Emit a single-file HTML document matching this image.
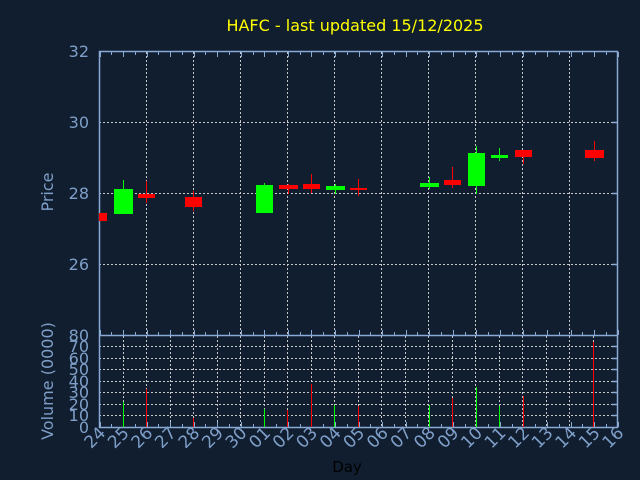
<!DOCTYPE html>
<html><head><meta charset="utf-8"><style>
html,body{margin:0;padding:0;background:#101e2f;width:640px;height:480px;overflow:hidden}
svg{display:block}
text{font-family:"DejaVu Sans","Liberation Sans",sans-serif}
</style></head><body>
<svg width="640" height="480" viewBox="0 0 640 480" xmlns="http://www.w3.org/2000/svg">
<rect width="640" height="480" fill="#101e2f"/>
<text x="355" y="31" fill="#ffff00" font-size="16" text-anchor="middle">HAFC - last updated 15/12/2025</text>
<g stroke="#c8c8c8" stroke-width="1" stroke-dasharray="2,2">
<line x1="99" y1="122.5" x2="617" y2="122.5"/>
<line x1="99" y1="193.5" x2="617" y2="193.5"/>
<line x1="99" y1="264.5" x2="617" y2="264.5"/>
<line x1="146.5" y1="52" x2="146.5" y2="335"/><line x1="193.5" y1="52" x2="193.5" y2="335"/>
<line x1="240.5" y1="52" x2="240.5" y2="335"/><line x1="287.5" y1="52" x2="287.5" y2="335"/>
<line x1="334.5" y1="52" x2="334.5" y2="335"/><line x1="381.5" y1="52" x2="381.5" y2="335"/>
<line x1="428.5" y1="52" x2="428.5" y2="335"/><line x1="475.5" y1="52" x2="475.5" y2="335"/>
<line x1="522.5" y1="52" x2="522.5" y2="335"/><line x1="569.5" y1="52" x2="569.5" y2="335"/>
<line x1="99" y1="346.5" x2="617" y2="346.5"/><line x1="99" y1="358.5" x2="617" y2="358.5"/>
<line x1="99" y1="369.5" x2="617" y2="369.5"/><line x1="99" y1="381.5" x2="617" y2="381.5"/>
<line x1="99" y1="392.5" x2="617" y2="392.5"/><line x1="99" y1="404.5" x2="617" y2="404.5"/>
<line x1="99" y1="415.5" x2="617" y2="415.5"/>
<line x1="123.5" y1="336" x2="123.5" y2="427"/><line x1="146.5" y1="336" x2="146.5" y2="427"/>
<line x1="170.5" y1="336" x2="170.5" y2="427"/><line x1="193.5" y1="336" x2="193.5" y2="427"/>
<line x1="217.5" y1="336" x2="217.5" y2="427"/><line x1="240.5" y1="336" x2="240.5" y2="427"/>
<line x1="264.5" y1="336" x2="264.5" y2="427"/><line x1="287.5" y1="336" x2="287.5" y2="427"/>
<line x1="311.5" y1="336" x2="311.5" y2="427"/><line x1="334.5" y1="336" x2="334.5" y2="427"/>
<line x1="358.5" y1="336" x2="358.5" y2="427"/><line x1="381.5" y1="336" x2="381.5" y2="427"/>
<line x1="405.5" y1="336" x2="405.5" y2="427"/><line x1="428.5" y1="336" x2="428.5" y2="427"/>
<line x1="452.5" y1="336" x2="452.5" y2="427"/><line x1="475.5" y1="336" x2="475.5" y2="427"/>
<line x1="499.5" y1="336" x2="499.5" y2="427"/><line x1="522.5" y1="336" x2="522.5" y2="427"/>
<line x1="546.5" y1="336" x2="546.5" y2="427"/><line x1="569.5" y1="336" x2="569.5" y2="427"/>
<line x1="593.5" y1="336" x2="593.5" y2="427"/>
</g>
<g stroke="#8aaad6" stroke-width="1.5" fill="none">
<rect x="99.5" y="51.5" width="518" height="376"/>
<line x1="99" y1="335.5" x2="618" y2="335.5"/>
<line x1="612" y1="122.5" x2="618" y2="122.5"/><line x1="612" y1="193.5" x2="618" y2="193.5"/><line x1="612" y1="264.5" x2="618" y2="264.5"/>
<line x1="612" y1="346.5" x2="618" y2="346.5"/><line x1="612" y1="358.5" x2="618" y2="358.5"/><line x1="612" y1="369.5" x2="618" y2="369.5"/>
<line x1="612" y1="381.5" x2="618" y2="381.5"/><line x1="612" y1="392.5" x2="618" y2="392.5"/><line x1="612" y1="404.5" x2="618" y2="404.5"/><line x1="612" y1="415.5" x2="618" y2="415.5"/>
</g>
<g stroke="#8aaad6" stroke-width="1" id="ticks"></g>
<g>
<rect x="99" y="213" width="8" height="8" fill="#ff0000"/>
<line x1="123.5" y1="180" x2="123.5" y2="214" stroke="#00ff00"/><rect x="114" y="189" width="19" height="25" fill="#00ff00"/>
<line x1="146.5" y1="181" x2="146.5" y2="203" stroke="#ff0000"/><rect x="138" y="194" width="17" height="4" fill="#ff0000"/>
<line x1="193.5" y1="191" x2="193.5" y2="211" stroke="#ff0000"/><rect x="185" y="197" width="17" height="10" fill="#ff0000"/>
<line x1="264.5" y1="183" x2="264.5" y2="213" stroke="#00ff00"/><rect x="256" y="185" width="17" height="28" fill="#00ff00"/>
<line x1="288.5" y1="184" x2="288.5" y2="194" stroke="#ff0000"/><rect x="279" y="185" width="19" height="4" fill="#ff0000"/>
<line x1="311.5" y1="174" x2="311.5" y2="193" stroke="#ff0000"/><rect x="303" y="184" width="17" height="5" fill="#ff0000"/>
<line x1="335.5" y1="184" x2="335.5" y2="194" stroke="#00ff00"/><rect x="326" y="186" width="19" height="4" fill="#00ff00"/>
<line x1="358.5" y1="179" x2="358.5" y2="196" stroke="#ff0000"/><rect x="350" y="188" width="17" height="2" fill="#ff0000"/>
<line x1="429.5" y1="177" x2="429.5" y2="189" stroke="#00ff00"/><rect x="420" y="183" width="19" height="4" fill="#00ff00"/>
<line x1="452.5" y1="167" x2="452.5" y2="188" stroke="#ff0000"/><rect x="444" y="180" width="17" height="5" fill="#ff0000"/>
<line x1="476.5" y1="146" x2="476.5" y2="194" stroke="#00ff00"/><rect x="468" y="153" width="17" height="33" fill="#00ff00"/>
<line x1="499.5" y1="148" x2="499.5" y2="161" stroke="#00ff00"/><rect x="491" y="155" width="17" height="3" fill="#00ff00"/>
<line x1="523.5" y1="150" x2="523.5" y2="164" stroke="#ff0000"/><rect x="515" y="150" width="17" height="7" fill="#ff0000"/>
<line x1="594.5" y1="141" x2="594.5" y2="161" stroke="#ff0000"/><rect x="585" y="150" width="19" height="8" fill="#ff0000"/>
</g>
<g stroke-width="1">
<line x1="123.5" y1="402" x2="123.5" y2="427" stroke="#00ff00"/>
<line x1="146.5" y1="389" x2="146.5" y2="427" stroke="#ff0000"/>
<line x1="193.5" y1="418" x2="193.5" y2="427" stroke="#ff0000"/>
<line x1="264.5" y1="409" x2="264.5" y2="427" stroke="#00ff00"/>
<line x1="287.5" y1="410" x2="287.5" y2="427" stroke="#ff0000"/>
<line x1="311.5" y1="384" x2="311.5" y2="427" stroke="#ff0000"/>
<line x1="334.5" y1="405" x2="334.5" y2="427" stroke="#00ff00"/>
<line x1="358.5" y1="406" x2="358.5" y2="427" stroke="#ff0000"/>
<line x1="429.5" y1="405" x2="429.5" y2="427" stroke="#00ff00"/>
<line x1="452.5" y1="398" x2="452.5" y2="427" stroke="#ff0000"/>
<line x1="476.5" y1="387" x2="476.5" y2="427" stroke="#00ff00"/>
<line x1="499.5" y1="406" x2="499.5" y2="427" stroke="#00ff00"/>
<line x1="523.5" y1="396" x2="523.5" y2="427" stroke="#ff0000"/>
<line x1="593.5" y1="342" x2="593.5" y2="427" stroke="#ff0000"/>
</g>
<g fill="#7f9fc9" font-size="16" text-anchor="end">
<text x="89" y="57">32</text><text x="89" y="128">30</text><text x="89" y="199">28</text><text x="89" y="270">26</text>
<text x="89" y="341">80</text><text x="89" y="352">70</text><text x="89" y="364">60</text><text x="89" y="375">50</text>
<text x="89" y="387">40</text><text x="89" y="398">30</text><text x="89" y="410">20</text><text x="89" y="421">10</text><text x="89" y="433">0</text>
</g>
<text transform="translate(53,192) rotate(-90)" fill="#7f9fc9" font-size="16" text-anchor="middle">Price</text>
<text transform="translate(53,381) rotate(-90)" fill="#7f9fc9" font-size="16" text-anchor="middle">Volume (0000)</text>
<text x="347" y="472" fill="#000" font-size="15" text-anchor="middle">Day</text>
<g fill="#7f9fc9" font-size="17" text-anchor="end" id="xl"></g>
</svg>
<script>
var ns="http://www.w3.org/2000/svg";
var labs=["24","25","26","27","28","29","30","01","02","03","04","05","06","07","08","09","10","11","12","13","14","15","16"];
var g=document.getElementById("xl"),t=document.getElementById("ticks");
function ln(x1,y1,x2,y2){var l=document.createElementNS(ns,"line");l.setAttribute("x1",x1);l.setAttribute("y1",y1);l.setAttribute("x2",x2);l.setAttribute("y2",y2);t.appendChild(l);}
for(var i=0;i<labs.length;i++){var x=99.5+23.55*i;
var e=document.createElementNS(ns,"text");e.setAttribute("transform","translate("+(x+7)+",434) rotate(-45)");e.textContent=labs[i];g.appendChild(e);}
for(var k=0;k<45;k++){var x=Math.round(99.5+11.775*k)+0.5;var h=(k%2==0)?5:3;
ln(x,52,x,52+h);ln(x,335,x,335-h);ln(x,427,x,427-h);}
</script>
</body></html>
